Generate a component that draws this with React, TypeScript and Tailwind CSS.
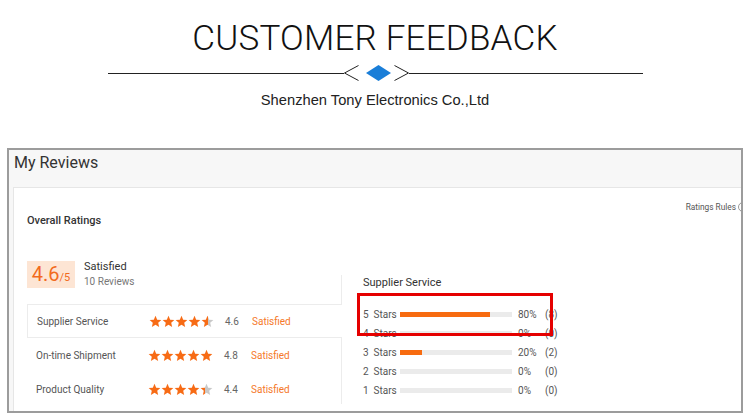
import React from 'react';

const ORANGE = '#f76b15';

type Aspect = { label: string; score: number; active?: boolean };

const ASPECTS: Aspect[] = [
  { label: 'Supplier Service', score: 4.6, active: true },
  { label: 'On-time Shipment', score: 4.8 },
  { label: 'Product Quality', score: 4.4 },
];

const BREAKDOWN = [
  { stars: 5, pct: 80, count: 8 },
  { stars: 4, pct: 0, count: 0 },
  { stars: 3, pct: 20, count: 2 },
  { stars: 2, pct: 0, count: 0 },
  { stars: 1, pct: 0, count: 0 },
];

// one star, fill = 0..1 share in orange, rest grey
const Star: React.FC<{ fill: number; id: string }> = ({ fill, id }) => (
  <svg width="13" height="13" viewBox="0 0 24 24">
    <defs>
      <linearGradient id={id}>
        <stop offset={fill} stopColor={ORANGE} />
        <stop offset={fill} stopColor="#c8c8c8" />
      </linearGradient>
    </defs>
    <polygon
      points="12,1.5 15.1,8.6 22.8,9.3 17,14.4 18.7,22 12,18 5.3,22 7,14.4 1.2,9.3 8.9,8.6"
      fill={`url(#${id})`}
    />
  </svg>
);

const Stars: React.FC<{ score: number; name: string }> = ({ score, name }) => {
  // visual: 4.6 -> half, 4.8 -> full, 4.4 -> ~40%
  const last = score >= 4.8 ? 1 : score >= 4.6 ? 0.55 : 0.4;
  return (
    <div className="flex w-[65px]">
      {[0, 1, 2, 3].map((i) => (
        <Star key={i} fill={1} id={`${name}-${i}`} />
      ))}
      <Star fill={last} id={`${name}-4`} />
    </div>
  );
};

const Divider: React.FC = () => (
  <div className="flex items-center h-[18px]">
    <div className="w-[236px] h-px bg-[#222]" />
    <svg width="65" height="18" viewBox="0 0 65 18" className="shrink-0">
      <polyline points="14.5,1.5 0.5,9 14.5,16.5" fill="none" stroke="#222" strokeWidth="1" />
      <polygon points="22,9 34.5,1 47,9 34.5,17" fill="#1a7ed8" />
      <polyline points="50.5,1.5 64.5,9 50.5,16.5" fill="none" stroke="#222" strokeWidth="1" />
    </svg>
    <div className="w-[234px] h-px bg-[#222]" />
  </div>
);

const App: React.FC = () => {
  return (
    <div className="w-[750px] h-[419px] bg-white overflow-hidden font-['Roboto',sans-serif]">
      {/* Banner */}
      <div className="h-[148px] flex flex-col items-center">
        <h1 className="mt-[21px] h-[36px] leading-[36px] text-[35px] font-light tracking-[0.2px] text-[#111] font-['Roboto',sans-serif]">
          CUSTOMER FEEDBACK
        </h1>
        <div className="mt-[7px]">
          <Divider />
        </div>
        <p className="mt-[10px] h-[16px] leading-[16px] text-[14.7px] text-[#222] font-['Liberation_Sans',Arial,sans-serif]">
          Shenzhen Tony Electronics Co.,Ltd
        </p>
      </div>

      {/* Reviews panel */}
      <div className="ml-[7px] w-[736px] h-[265px] border-2 border-[#9c9c9c] bg-[#f7f7f7] overflow-hidden">
        <div className="h-[37px] pl-[5px]">
          <h2 className="h-[26px] leading-[26px] text-[16px] text-[#333]">My Reviews</h2>
        </div>

        <div className="ml-[4px] w-[745px] h-[240px] bg-white border-l border-t border-[#e6e6e6] pl-[13px] pr-[10px]">
          <div className="flex justify-between items-start">
            <div className="mt-[26px] h-[14px] leading-[14px] text-[11px] font-medium text-[#333]">
              Overall Ratings
            </div>
            <div className="mt-[13px] h-[12px] flex items-center gap-[2px] text-[8.3px] text-[#555]">
              <span>Ratings Rules</span>
              <span className="w-[10px] h-[10px] rounded-full border border-[#999] text-[7px] leading-[8px] text-center text-[#999]">
                ?
              </span>
            </div>
          </div>

          <div className="flex mt-[33px]">
            {/* left column */}
            <div className="w-[314px]">
              <div className="flex items-start">
                <div className="w-[48px] h-[27px] bg-[#fde5d4] flex items-baseline justify-center pt-[1px]">
                  <span className="text-[20px] leading-[24px] text-[#f26b1d]">4.6</span>
                  <span className="text-[11px] leading-[24px] text-[#f26b1d]">/5</span>
                </div>
                <div className="ml-[9px] -mt-[1px]">
                  <div className="h-[14px] leading-[14px] text-[11px] text-[#333]">Satisfied</div>
                  <div className="h-[15px] leading-[15px] text-[10px] text-[#777]">10 Reviews</div>
                </div>
              </div>

              <div className="mt-[15px]">
                {ASPECTS.map((a, i) => (
                  <div
                    key={a.label}
                    className={
                      a.active
                        ? 'relative z-10 -mr-px h-[34px] flex items-center pl-[9px] bg-white border-t border-b border-l border-[#ececec]'
                        : 'h-[34px] flex items-center pl-[9px]'
                    }
                  >
                    <span className="w-[112px] text-[10px] text-[#555]">{a.label}</span>
                    <Stars score={a.score} name={`s${i}`} />
                    <span className="ml-[11px] w-[27px] text-[10px] text-[#666]">{a.score}</span>
                    <span className="text-[10px] text-[#f5792a]">Satisfied</span>
                  </div>
                ))}
              </div>
            </div>

            {/* right column */}
            <div className="relative mt-[14px] h-[129px] border-l border-[#ececec] pl-[21px]">
              <div className="h-[16px] leading-[16px] text-[11px] text-[#333]">Supplier Service</div>
              <div className="mt-[14px]">
                {BREAKDOWN.map((b) => (
                  <div key={b.stars} className="h-[19px] flex items-center text-[10px] text-[#555]">
                    <span className="w-[37px]">
                      {b.stars}&nbsp;&nbsp;Stars
                    </span>
                    <div className="w-[112px] h-[5px] bg-[#ebebeb]">
                      <div className="h-full bg-[#f76b10]" style={{ width: `${b.pct}%` }} />
                    </div>
                    <span className="ml-[6px] w-[27px]">{b.pct}%</span>
                    <span>({b.count})</span>
                  </div>
                ))}
              </div>
              {/* annotation box */}
              <div className="absolute left-[15px] top-[18px] w-[196px] h-[43px] border-[3px] border-[#e50000]" />
            </div>
          </div>
        </div>
      </div>
    </div>
  );
};

export default App;
